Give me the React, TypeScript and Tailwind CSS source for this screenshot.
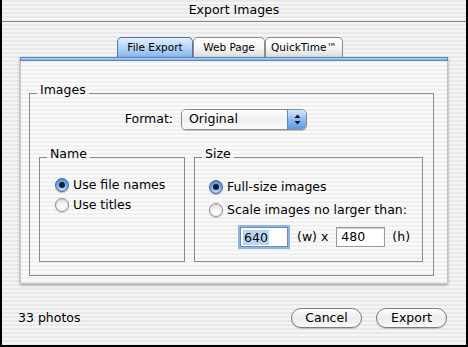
import React from "react";

const stripes =
  "bg-[repeating-linear-gradient(180deg,#e9e9e9_0px,#e9e9e9_2px,#f5f5f5_2px,#f5f5f5_4px)]";

function Radio({ checked }: { checked: boolean }) {
  return checked ? (
    <span className="flex h-[14px] w-[14px] shrink-0 items-center justify-center rounded-full border border-[#3f68a5] bg-[radial-gradient(circle_at_50%_75%,#c9e4fd_0%,#6fa6e8_55%,#3f7bd0_100%)] shadow-[0_1px_1px_rgba(0,0,0,0.25)]">
      <span className="h-[6px] w-[6px] rounded-full bg-[#141c2a]" />
    </span>
  ) : (
    <span className="h-[14px] w-[14px] shrink-0 rounded-full border border-[#8c8c8c] bg-[radial-gradient(circle_at_50%_80%,#ffffff_0%,#f1f1f1_50%,#cfcfcf_100%)] shadow-[0_1px_1px_rgba(0,0,0,0.2)]" />
  );
}

function Option({ checked, label }: { checked: boolean; label: string }) {
  return (
    <div className="flex h-[20px] items-center gap-[4px]">
      <Radio checked={checked} />
      <span>{label}</span>
    </div>
  );
}

function Tab({ label, active, width }: { label: string; active?: boolean; width: string }) {
  return (
    <div
      className={`${width} flex h-[20px] items-center justify-center rounded-t-[5px] border border-b-0 text-[10.5px] ${
        active
          ? "border-[#4d76b0] bg-gradient-to-b from-[#e3effc] via-[#b5d4f6] to-[#89b9ee]"
          : "border-[#8e8e8e] bg-gradient-to-b from-[#ffffff] via-[#f6f6f6] to-[#dedede]"
      }`}
    >
      {label}
    </div>
  );
}

function Button({ label }: { label: string }) {
  return (
    <button className="flex h-[20px] w-[71px] items-center justify-center rounded-full border border-[#7c7c7c] bg-gradient-to-b from-[#ffffff] via-[#ececec] to-[#f9f9f9] shadow-[0_1px_1px_rgba(0,0,0,0.2)]">
      {label}
    </button>
  );
}

export default function App() {
  return (
    <div
      className={`flex h-[347px] w-[468px] flex-col border-x-2 border-b-2 border-black ${stripes} font-['DejaVu_Sans',sans-serif] text-[12.5px] leading-none text-black`}
    >
      {/* Title bar */}
      <div className="flex h-[22px] shrink-0 items-center justify-center border-b border-[#858585]">
        Export Images
      </div>

      {/* Tabs */}
      <div className="mt-[15px] flex shrink-0 pl-[115px]">
        <Tab label="File Export" active width="w-[76px]" />
        <Tab label="Web Page" width="w-[72px]" />
        <Tab label="QuickTime™" width="w-[78px]" />
      </div>

      {/* Panel */}
      <div className="mx-[18px] flex h-[227px] shrink-0 flex-col border-x border-b border-[#c4c4c4] bg-[repeating-linear-gradient(180deg,#f0f0f0_0px,#f0f0f0_2px,#fafafa_2px,#fafafa_4px)] shadow-[0_1px_3px_rgba(0,0,0,0.35)]">
        <div className="-mx-px h-[4px] shrink-0 border border-[#5a84bf] bg-gradient-to-b from-[#bcd8f6] to-[#79a9e4]" />

        <fieldset className="ml-[8px] mr-[13px] mt-[21px] h-[194px] border border-[#8a8a8a]">
          <legend className="ml-[7px] px-[3px] pb-[7px] leading-[15px]">Images</legend>

          <div className="mt-[5px] flex h-[21px] items-center">
            <span className="w-[143px] text-right">Format:</span>
            <div className="ml-[8px] flex h-[21px] w-[126px] overflow-hidden rounded-[5px] border border-[#8a8a8a] shadow-[0_1px_1px_rgba(0,0,0,0.2)]">
              <div className="flex flex-1 items-center bg-gradient-to-b from-[#ffffff] via-[#f0f0f0] to-[#fbfbfb] pl-[7px]">
                Original
              </div>
              <div className="flex w-[19px] items-center justify-center border-l border-[#5f86bd] bg-gradient-to-b from-[#d6e8fb] via-[#8fbdf0] to-[#5c9ae6]">
                <svg width="7" height="11" viewBox="0 0 7 11">
                  <path d="M3.5 0.5 L6.5 4 L0.5 4 Z" fill="#111" />
                  <path d="M3.5 10.5 L6.5 7 L0.5 7 Z" fill="#111" />
                </svg>
              </div>
            </div>
          </div>

          <div className="mt-[16px] flex gap-[9px] pl-[9px]">
            <fieldset className="h-[116px] w-[146px] border border-[#8a8a8a]">
              <legend className="ml-[7px] px-[3px] pb-[7px] leading-[15px]">Name</legend>
              <div className="flex flex-col pl-[15px] pt-[7px]">
                <Option checked label="Use file names" />
                <Option checked={false} label="Use titles" />
              </div>
            </fieldset>

            <fieldset className="h-[116px] w-[229px] border border-[#8a8a8a]">
              <legend className="ml-[7px] px-[3px] pb-[7px] leading-[15px]">Size</legend>
              <div className="flex flex-col gap-[3px] pl-[14px] pt-[9px]">
                <Option checked label="Full-size images" />
                <Option checked={false} label="Scale images no larger than:" />
                <div className="mt-[4px] flex h-[20px] items-center">
                  <div className="ml-[31px] flex h-[20px] w-[48px] items-center border border-[#6c8bb8] bg-white pl-[2px] shadow-[0_0_0_2px_#8fb5e4]">
                    <span className="bg-[#b8d5f6] px-px leading-[15px]">640</span>
                  </div>
                  <span className="ml-[9px]">(w) x</span>
                  <div className="ml-[8px] flex h-[20px] w-[49px] items-center border border-[#9a9a9a] bg-white pl-[4px] shadow-[inset_0_1px_1px_rgba(0,0,0,0.2)]">
                    480
                  </div>
                  <span className="ml-[7px]">(h)</span>
                </div>
              </div>
            </fieldset>
          </div>
        </fieldset>
      </div>

      {/* Footer */}
      <div className="mt-[24px] flex h-[20px] shrink-0 items-center pl-[16px] pr-[19px]">
        <span className="flex-1">33 photos</span>
        <div className="flex gap-[14px]">
          <Button label="Cancel" />
          <Button label="Export" />
        </div>
      </div>
    </div>
  );
}
